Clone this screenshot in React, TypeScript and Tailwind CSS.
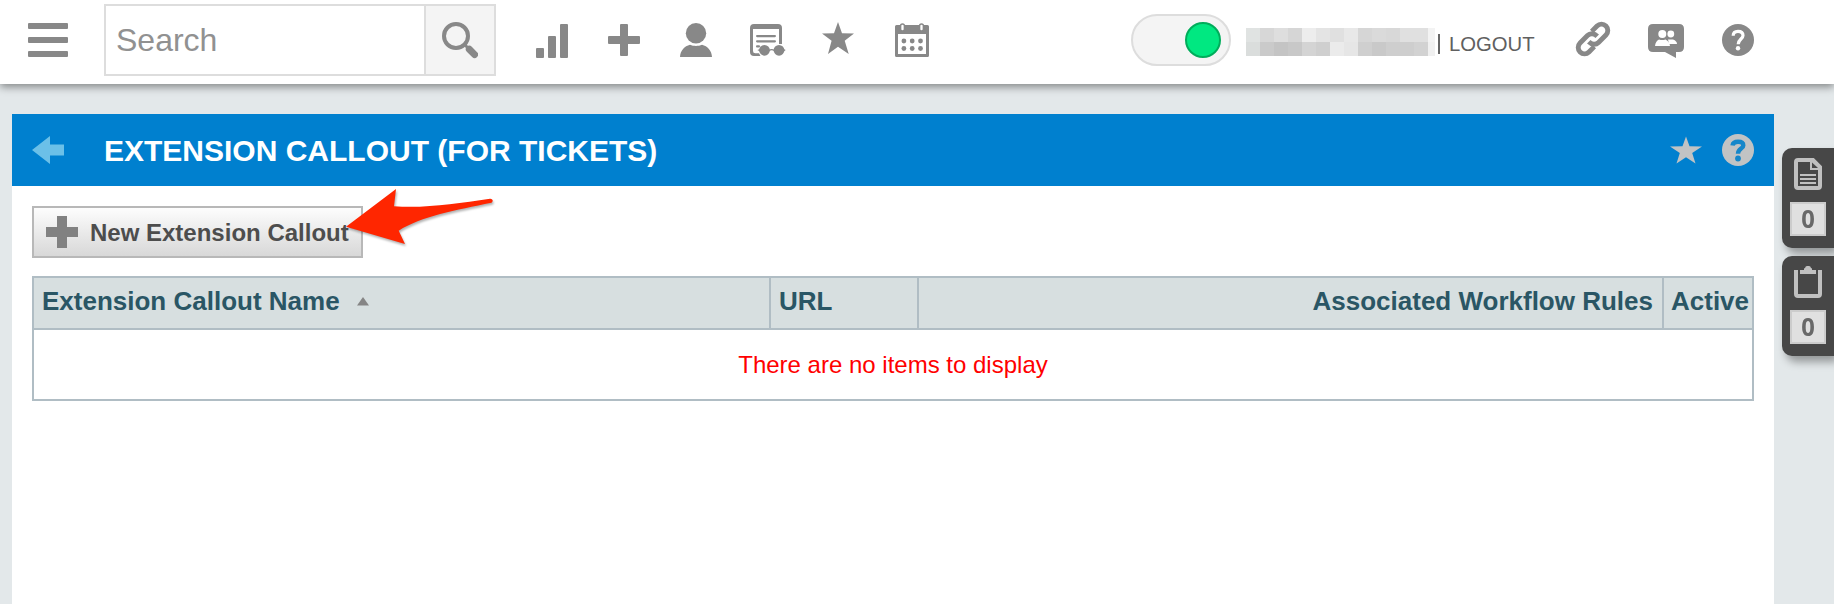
import type { ReactNode } from "react";

const GRAY = "#888888";

function Icon({ children, className = "" }: { children: ReactNode; className?: string }) {
  return (
    <svg viewBox="0 0 40 40" fill={GRAY} className={`block h-10 w-10 shrink-0 ${className}`}>
      {children}
    </svg>
  );
}

const maskRows: string[][] = [
  ["#e0e3e2", "#d7d7d7", "#dedede", "#d6d6d6", "#ededed", "#e4e4e4", "#e0e0e0", "#e8e8e8", "#d6d6d6", "#dadada", "#d8d8d8", "#e0e0e0", "#e0e0e0", "#f3f3f3"],
  ["#dadddc", "#cacaca", "#c4c4c4", "#c8c8c8", "#d4d4d4", "#cfcfcf", "#ebebeb", "#e6e6e6", "#cfcfcf", "#c9c9c9", "#cecece", "#cecece", "#d2d2d2", "#f0f0f0"],
];

function MaskedName() {
  return (
    <div className="ml-[15px] mt-1 h-7 w-[189px] shrink-0 overflow-hidden">
      {maskRows.map((row, r) => (
        <div key={r} className="flex w-[196px]">
          {row.map((c, i) => (
            <span key={i} className="h-3.5 w-3.5" style={{ backgroundColor: c }} />
          ))}
        </div>
      ))}
    </div>
  );
}

function Toolbar() {
  return (
    <nav className="ml-9 flex gap-8">
      <Icon>
        <rect x="4" y="28" width="8" height="10" rx="1" />
        <rect x="16" y="16" width="8" height="22" rx="1" />
        <rect x="28" y="4" width="8" height="34" rx="1" />
      </Icon>
      <Icon>
        <rect x="16" y="4" width="8" height="32" rx="1" />
        <rect x="4" y="16" width="32" height="8" rx="1" />
      </Icon>
      <Icon>
        <circle cx="20" cy="13.2" r="10.2" />
        <path d="M4 37C4.300 30.500 8.500 26 14 24.700C17.500 26.300 22.500 26.300 26 24.700C31.500 26 35.700 30.500 36 37Z" />
      </Icon>
      <Icon>
        <path d="M6 4H30Q34 4 34 8V24H31V9H5V31Q5 33.300 7.300 33.300H11L12.500 36H6Q2 36 2 32V8Q2 4 6 4Z" />
        <rect x="8" y="15" width="20" height="2.200" rx="1.100" />
        <rect x="8" y="20.200" width="20" height="2.200" rx="1.100" />
        <rect x="8" y="25.300" width="4" height="2.200" rx="1" />
        <circle cx="16.500" cy="30.300" r="5.400" />
        <circle cx="31" cy="30.300" r="5.400" />
        <path d="M9.300 30L12 29V31.500ZM37.800 30L35.500 29V31.500Z" />
        <path d="M21 30.500Q23.700 28.800 26.500 30.500" fill="none" stroke={GRAY} strokeWidth="1.400" />
      </Icon>
      <Icon>
        <path d="M18 2L22 13.200L34 13.500L24.700 20.800L28.700 34L18 26.800L8 34L11.600 20.800L2 13.500L14 13.200Z" />
      </Icon>
      <Icon>
        <path fillRule="evenodd" d="M4.500 5H35.500Q37 5 37 6.500V35.500Q37 37 35.500 37H4.500Q3 37 3 35.500V6.500Q3 5 4.500 5ZM6 14V34H34V14Z" />
        <rect x="8.600" y="3.900" width="3.800" height="7.200" rx="1.900" fill="#fff" stroke={GRAY} strokeWidth="1.500" />
        <rect x="27.600" y="3.900" width="3.800" height="7.200" rx="1.900" fill="#fff" stroke={GRAY} strokeWidth="1.500" />
        <circle cx="11.900" cy="21" r="2.400" />
        <circle cx="20.200" cy="21" r="2.400" />
        <circle cx="28.500" cy="21" r="2.400" />
        <circle cx="11.900" cy="28.500" r="2.400" />
        <circle cx="20.200" cy="28.500" r="2.400" />
        <circle cx="28.500" cy="28.500" r="2.400" />
      </Icon>
    </nav>
  );
}

function UtilityIcons() {
  const link = "M4.500-6.300H12A6.300 6.300 0 0 1 12 6.300H1.500C-2.500 6.300-5 3-5-1";
  return (
    <div className="ml-[38px] flex gap-[33px]">
      <Icon>
        <g transform="translate(20 19) rotate(-45)" fill="none" stroke={GRAY} strokeWidth="4.900">
          <path d={link} />
          <path d={link} transform="rotate(180)" />
        </g>
      </Icon>
      <Icon>
        <path d="M7 4H33Q38 4 38 9V27Q38 32 33 32H30V38L19 32H7Q2 32 2 27V9Q2 4 7 4Z" />
        <g fill="#fff">
          <circle cx="24.800" cy="14" r="3.400" />
          <path d="M22 19.500H27Q31 21 31 24H23Z" />
          <circle cx="16.300" cy="14" r="4.600" fill={GRAY} />
          <circle cx="16.300" cy="14" r="4" />
          <path d="M9 26Q9.500 21 13 19.500Q16.300 20.700 19.500 19.500Q23.700 21.500 24 26Z" />
        </g>
      </Icon>
      <Icon>
        <circle cx="19" cy="20" r="16" />
        <path d="M14.200 15.800C14.200 12.700 16 11.400 19 11.400C22 11.400 24 12.900 24 15.500C24 18.900 19.200 19.300 19.200 24.300" fill="none" stroke="#fff" strokeWidth="3.200" />
        <circle cx="19" cy="28.200" r="2.200" fill="#fff" />
      </Icon>
    </div>
  );
}

function TopBar() {
  return (
    <header className="relative z-10 flex h-[84px] items-start bg-white shadow-[0_3px_8px_rgba(0,0,0,0.42)]">
      <div className="ml-7 mt-[23px] flex w-10 flex-col gap-2">
        <span className="h-1.5 rounded-[1px] bg-[#888888]" />
        <span className="h-1.5 rounded-[1px] bg-[#888888]" />
        <span className="h-1.5 rounded-[1px] bg-[#888888]" />
      </div>
      <div className="ml-9 mt-1 flex h-[72px] w-[392px] border-2 border-[#dddddd]">
        <div className="flex w-[320px] items-center border-r-2 border-[#dddddd] pl-2.5 text-[32px] leading-none text-[#919191]">
          Search
        </div>
        <div className="grow bg-[#f4f4f4] pl-3 pt-3.5">
          <Icon>
            <circle cx="18" cy="16" r="12" fill="none" stroke={GRAY} strokeWidth="4" />
            <path d="M26.500 24.500L31 29" stroke={GRAY} strokeWidth="3" />
            <path d="M31.300 29.300L36.600 34.600" stroke={GRAY} strokeWidth="7" strokeLinecap="round" />
          </Icon>
        </div>
      </div>
      <div className="flex grow items-start pt-5">
        <Toolbar />
        <div className="-mt-1.5 ml-[199px] flex h-[52px] w-[100px] shrink-0 items-center justify-end rounded-full border-2 border-[#dddddd] bg-[#f4f4f4] pr-2">
          <span className="h-9 w-9 rounded-full border-2 border-[#00ad5b] bg-[#00e881]" />
        </div>
        <div className="mt-1">
          <MaskedName />
        </div>
        <div className="ml-[3px] mt-3.5 h-5 w-0.5 bg-[#666666]" />
        <div className="ml-[9px] mt-3 w-[86px] whitespace-nowrap text-[20.300px] leading-6 text-[#606060]">LOGOUT</div>
        <UtilityIcons />
      </div>
    </header>
  );
}

function PageTitle() {
  return (
    <div className="flex h-[72px] items-center bg-[#0080cf] pl-5 pr-5">
      <svg viewBox="0 0 32 28" className="h-7 w-8 shrink-0" fill="#6bc0e8">
        <path d="M0 14L18 0V8.500H32V19.500H18V28Z" />
      </svg>
      <h1 className="ml-10 pt-0.5 text-[30px] font-bold leading-9 text-white">EXTENSION CALLOUT (FOR TICKETS)</h1>
      <svg viewBox="0 0 32 32" className="ml-auto h-8 w-8" fill="#c1c3c4">
        <path d="M16 2.500L19.500 12.300L32 12.500L22.200 18.900L25.500 29.500L16 23.300L6.500 29.500L9.800 18.900L0 12.500L12.500 12.300Z" />
      </svg>
      <svg viewBox="0 0 32 32" className="ml-5 h-8 w-8">
        <circle cx="16" cy="16" r="16" fill="#c1c3c4" />
        <path d="M10.500 11.500C11 8.500 13 7.800 16 7.800C19.500 7.800 21.300 9 21.300 11.400C21.300 14.800 16 14.500 16 19.800" fill="none" stroke="#1587ca" strokeWidth="4.400" />
        <circle cx="16" cy="24.500" r="2.900" fill="#1587ca" />
      </svg>
    </div>
  );
}

function NewButton() {
  return (
    <div className="relative w-[331px]">
      <button className="flex h-[52px] w-[331px] items-center border-2 border-[#b8b8b8] bg-linear-to-b from-[#fdfdfd] to-[#d8d8d8] pl-3 text-2xl font-bold text-[#4d4d4d]">
        <svg viewBox="0 0 32 32" className="h-8 w-8 shrink-0" fill="#818181">
          <path d="M11 0H21V11H32V21H21V32H11V21H0V11H11Z" />
        </svg>
        <span className="ml-3 whitespace-nowrap pt-0.5 leading-8">New Extension Callout</span>
      </button>
      <svg viewBox="0 0 150 60" className="absolute -top-[18px] left-[313px] h-[60px] w-[150px] overflow-visible">
        <path
          d="M1 38.700L51 1L49 18.200C80 20.500 112 15.500 145 10.700C148 10.500 148.500 13.500 146.500 14.800C111 22 76 28.500 53.700 42.700L60 56Z"
          fill="#ff2600"
          className="drop-shadow-[1px_2px_1px_rgba(0,0,0,0.3)]"
        />
      </svg>
    </div>
  );
}

function CalloutTable() {
  return (
    <div className="mt-[18px] h-[125px] w-[1722px] border-2 border-[#b0bdc4]">
      <div className="flex h-[52px] border-b-2 border-[#b0bdc4] bg-[#d7dfe0] text-[26px] font-bold leading-8 text-[#2a5665]">
        <div className="flex w-[737px] shrink-0 border-r-2 border-[#b0bdc4] pl-2 pt-[7px]">
          Extension Callout Name
          <svg viewBox="0 0 12 9" className="ml-[17px] mt-3 h-[9px] w-3" fill="#858585">
            <path d="M6 0L12 8.500H0Z" />
          </svg>
        </div>
        <div className="w-[148px] shrink-0 border-r-2 border-[#b0bdc4] pl-2 pt-[7px]">URL</div>
        <div className="w-[745px] shrink-0 border-r-2 border-[#b0bdc4] pr-[9px] pt-[7px] text-right">
          Associated Workflow Rules
        </div>
        <div className="pl-[7px] pt-[7px]">Active</div>
      </div>
      <div className="flex h-[69px] items-center justify-center text-2xl text-[#ff0000]">There are no items to display</div>
    </div>
  );
}

function SideTab({ children }: { children: ReactNode }) {
  return (
    <div className="flex h-[100px] w-[52px] flex-col rounded-l-[10px] bg-[#474747] pl-2 pt-[10px] shadow-[4px_6px_8px_rgba(0,0,0,0.35)]">
      <svg viewBox="0 0 28 32" className="ml-1 h-8 w-7">
        {children}
      </svg>
      <div className="mt-3 flex h-[34px] w-9 items-center justify-center border-2 border-[#cccccc] bg-[#e0e0e0] pb-0.5 font-[family-name:Open_Sans] text-[25px] font-bold leading-none text-[#696969]">
        <span className="scale-x-95">0</span>
      </div>
    </div>
  );
}

export default function App() {
  return (
    <div className="h-[604px] w-[1834px] overflow-hidden bg-[#e3e8ea] font-['Liberation_Sans',Arial,sans-serif]">
      <TopBar />
      <div className="flex h-[520px] items-start pl-3 pt-[30px]">
        <main className="h-[490px] w-[1762px] shrink-0 bg-white">
          <PageTitle />
          <div className="px-5 pt-5">
            <NewButton />
            <CalloutTable />
          </div>
        </main>
        <aside className="ml-2 mt-[34px] flex flex-col gap-2">
          <SideTab>
            <path d="M4 2H19L26 9V28Q26 30 24 30H4Q2 30 2 28V4Q2 2 4 2Z" fill="none" stroke="#c0c0c0" strokeWidth="4" />
            <path d="M16 2H19L26 9V12H16Z" fill="#c0c0c0" />
            <path d="M18 4.500V10H24Z" fill="#474747" />
            <path d="M6 17H22M6 21H22M6 25H22" stroke="#c0c0c0" strokeWidth="1.800" />
          </SideTab>
          <SideTab>
            <path d="M2 4V28Q2 30 4 30H24Q26 30 26 28V4" fill="none" stroke="#c0c0c0" strokeWidth="4" />
            <path d="M6 4H10V3Q10 2 11 2Q11.500 0 13 0H15Q16.500 0 17 2Q18 2 18 3V4H22V8H6Z" fill="#c0c0c0" />
          </SideTab>
        </aside>
      </div>
    </div>
  );
}
